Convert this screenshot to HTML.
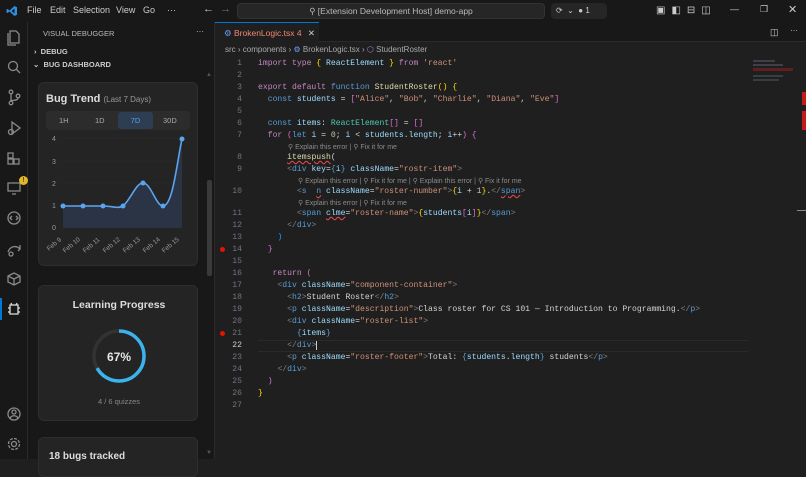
<!DOCTYPE html>
<html><head><meta charset="utf-8"><style>
*{box-sizing:border-box;margin:0;padding:0}
body{width:806px;height:459px;overflow:hidden;background:#1f1f1f;font-family:"Liberation Sans",sans-serif;color:#ccc;position:relative}
.abs{position:absolute}
#title{left:0;top:0;width:806px;height:22px;background:#181818;}
.menu{top:5px;font-size:9px;color:#ccc}
#act{left:0;top:22px;width:28px;height:437px;background:#181818;border-right:1px solid #2b2b2b}
#side{left:28px;top:22px;width:187px;height:437px;background:#181818;border-right:1px solid #2b2b2b}
.card{background:#242424;border:1px solid #2e2e2e;border-radius:6px}
#editor{left:215px;top:22px;width:591px;height:437px;background:#1f1f1f}
.code{font-family:"Liberation Mono",monospace;font-size:8.1px;white-space:pre;line-height:12px;height:12px}
.ln{position:absolute;left:0;width:27px;text-align:right;color:#6e7681;font-family:"Liberation Mono",monospace;font-size:8.1px}
.row{position:absolute;left:0;width:560px;height:12px}
.row .c{position:absolute;left:43px}
.inl{position:absolute;font-size:7px;color:#8b8b8b;white-space:pre}
.k{color:#c586c0}.b{color:#569cd6}.t{color:#4ec9b0}.v{color:#9cdcfe}.s{color:#ce9178}.f{color:#dcdcaa}.y{color:#ffd700}.p{color:#da70d6}.g{color:#808080}.w{color:#d4d4d4}.bl{color:#179fff}
.sq{text-decoration:underline wavy #f14c4c;text-decoration-thickness:1px}
</style></head><body>
<div id="title" class="abs">
 <svg class="abs" style="left:6px;top:5px" width="12" height="12" viewBox="0 0 24 24"><path d="M17 2l5 2.5v15L17 22 7 13l-4 3-2-1V9l2-1 4 3 10-9zm0 5l-6 5 6 5z" fill="#2f8fe0"/></svg>
 <span class="abs menu" style="left:27px">File</span>
 <span class="abs menu" style="left:50px">Edit</span>
 <span class="abs menu" style="left:73px">Selection</span>
 <span class="abs menu" style="left:116px">View</span>
 <span class="abs menu" style="left:143px">Go</span>
 <span class="abs menu" style="left:167px">···</span>
 <span class="abs menu" style="left:203px;font-size:11px;top:3px">←</span>
 <span class="abs menu" style="left:220px;font-size:11px;top:3px;color:#777">→</span>
 <div class="abs" style="left:237px;top:3px;width:308px;height:16px;background:#262626;border:1px solid #333;border-radius:4px;font-size:8.5px;color:#bbb;text-align:center;line-height:14px">⚲ [Extension Development Host] demo-app</div>
 <div class="abs" style="left:551px;top:3px;width:56px;height:16px;background:#262626;border-radius:4px;font-size:8px;color:#ccc;line-height:16px;padding-left:5px">⟳ &nbsp;⌄ &nbsp;● 1</div>
 <div class="abs" style="left:656px;top:5px;font-size:10px;color:#ccc;letter-spacing:6px">▣◧⊟◫</div>
 <span class="abs menu" style="left:730px;top:4px">—</span>
 <span class="abs menu" style="left:760px;top:4px">❐</span>
 <span class="abs menu" style="left:788px;top:3px;font-size:11px">✕</span>
</div>
<div id="act" class="abs">
 <svg width="28" height="437" viewBox="0 22 28 437" fill="none" stroke="#8a8a8a" stroke-width="1.3">
  <path d="M10 31h6l3 3v9h-9z M8 33v12h8"/>
  <circle cx="13" cy="66" r="4.5"/><path d="M16 69l4 4"/>
  <circle cx="11" cy="92" r="1.8"/><circle cx="11" cy="103" r="1.8"/><circle cx="18" cy="96" r="1.8"/><path d="M11 94v7M18 98c0 3-7 2-7 3"/>
  <path d="M12 122l8 6-8 6z"/><circle cx="11" cy="132" r="2.5"/>
  <path d="M8 153h5v5H8zM8 159h5v5H8zM14 159h5v5h-5z"/>
  <path d="M8 183h12v8H8z M12 194h4"/>
  <circle cx="14" cy="218" r="6"/><path d="M12 216l-2 2 2 2M16 216l2 2-2 2"/>
  <path d="M8 252c2-6 8-7 12-3l-2 2M20 249v-4"/><circle cx="11" cy="254" r="2"/>
  <path d="M8 276l6-3 6 3v6l-6 3-6-3z M8 276l6 3 6-3 M14 279v6"/>
  <path d="M10 305h8v9h-8z M11 303l1 2M17 303l-1 2M8 308h2M18 308h2M8 312h2M18 312h2" stroke="#ddd"/>
  <circle cx="14" cy="414" r="6"/><circle cx="14" cy="412" r="2"/><path d="M10 418c2-3 6-3 8 0"/>
  <circle cx="14" cy="444" r="2.5"/><circle cx="14" cy="444" r="5.5" stroke-dasharray="3 1.3"/>
 </svg>
 <div class="abs" style="left:19px;top:154px;width:9px;height:9px;border-radius:50%;background:#e5b52a;font-size:7px;color:#000;text-align:center;line-height:9px">!</div>
 <div class="abs" style="left:0;top:276px;width:2px;height:22px;background:#0078d4"></div>
</div>
<div id="side" class="abs">
 <span class="abs" style="left:15px;top:7px;font-size:7.5px;color:#bbb">VISUAL DEBUGGER</span>
 <span class="abs" style="left:168px;top:5px;font-size:8px">···</span>
 <span class="abs" style="left:6px;top:25px;font-size:7.5px;font-weight:bold;color:#ccc">›&nbsp; DEBUG</span>
 <span class="abs" style="left:5px;top:38px;font-size:7.5px;font-weight:bold;color:#ccc">⌄&nbsp; BUG DASHBOARD</span>
 <div class="abs" style="left:179px;top:158px;width:5px;height:96px;background:#3a3a3a;border-radius:2px"></div>
 <div class="abs card" style="left:10px;top:60px;width:160px;height:184px">
  <div class="abs" style="left:7px;top:10px;font-size:11px;font-weight:bold;color:#ddd">Bug Trend <span style="font-size:8px;font-weight:normal;color:#999">(Last 7 Days)</span></div>
  <div class="abs" style="left:7px;top:28px;width:144px;height:19px;background:#2c2c2c;border-radius:4px;font-size:7.5px;color:#aaa">
   <span class="abs" style="left:13px;top:5px">1H</span><span class="abs" style="left:49px;top:5px">1D</span>
   <div class="abs" style="left:72px;top:1px;width:35px;height:17px;background:#2d3e52;border-radius:3px;color:#5aa0e8;text-align:center;line-height:17px">7D</div>
   <span class="abs" style="left:117px;top:5px">30D</span>
  </div>
  <svg class="abs" style="left:0;top:0" width="160" height="184" viewBox="38 82 160 184">
   <g font-size="7" fill="#999" font-family="Liberation Sans"><text x="51" y="140">4</text><text x="51" y="163">3</text><text x="51" y="185">2</text><text x="51" y="207">1</text><text x="51" y="229">0</text></g>
   <g stroke="#2e2e2e" stroke-width="0.6"><path d="M60 137H183M60 160H183M60 182H183M60 204H183"/></g>
   <path d="M62 205L82 205L102 205C112 205 116 208 122 205C130 198 135 182 142 182C150 182 155 205 162 205C172 205 176 160 181 138L181 227L62 227Z" fill="#2a3445"/>
   <path d="M62 205L82 205L102 205C112 205 116 208 122 205C130 198 135 182 142 182C150 182 155 205 162 205C172 205 176 160 181 138" fill="none" stroke="#5ba4f0" stroke-width="1.6"/>
   <g fill="#5ba4f0"><circle cx="62" cy="205" r="2.5"/><circle cx="82" cy="205" r="2.5"/><circle cx="102" cy="205" r="2.5"/><circle cx="122" cy="205" r="2.5"/><circle cx="142" cy="182" r="2.5"/><circle cx="162" cy="205" r="2.5"/><circle cx="181" cy="138" r="2.5"/></g>
   <g font-size="6.5" fill="#999" font-family="Liberation Sans">
    <text transform="translate(48 250) rotate(-40)">Feb 9</text><text transform="translate(64 252) rotate(-40)">Feb 10</text><text transform="translate(84 252) rotate(-40)">Feb 11</text><text transform="translate(104 252) rotate(-40)">Feb 12</text><text transform="translate(124 252) rotate(-40)">Feb 13</text><text transform="translate(144 252) rotate(-40)">Feb 14</text><text transform="translate(163 252) rotate(-40)">Feb 15</text>
   </g>
  </svg>
 </div>
 <div class="abs card" style="left:10px;top:263px;width:160px;height:136px">
  <div class="abs" style="left:0;top:13px;width:160px;text-align:center;font-size:10.5px;font-weight:bold;color:#ddd">Learning Progress</div>
  <svg class="abs" style="left:52px;top:42px" width="56" height="56"><circle cx="28" cy="28" r="25" fill="none" stroke="#333" stroke-width="3.5"/><circle cx="28" cy="28" r="25" fill="none" stroke="#3bb4ee" stroke-width="3.5" stroke-dasharray="105 200" transform="rotate(-90 28 28)"/></svg>
  <div class="abs" style="left:0;top:64px;width:160px;text-align:center;font-size:12px;font-weight:bold;color:#e6e6e6">67%</div>
  <div class="abs" style="left:0;top:111px;width:160px;text-align:center;font-size:7.5px;color:#888">4 / 6 quizzes</div>
 </div>
 <div class="abs card" style="left:10px;top:415px;width:160px;height:40px">
  <div class="abs" style="left:10px;top:13px;font-size:10px;font-weight:bold;color:#ddd">18 bugs tracked</div>
 </div>
 <span class="abs" style="left:178px;top:50px;font-size:6px;color:#555">▲</span>
 <span class="abs" style="left:178px;top:428px;font-size:6px;color:#555">▼</span>
</div>
<div id="editor" class="abs">
 <div class="abs" style="left:0;top:0;width:591px;height:20px;background:#181818;border-bottom:1px solid #2b2b2b"></div>
 <div class="abs" style="left:0;top:0;width:104px;height:21px;background:#1f1f1f;border-top:1px solid #0078d4;font-size:8.5px;color:#f48771;line-height:20px;padding-left:9px"><span style="color:#6c9ef8">⚙</span> BrokenLogic.tsx 4 <span style="color:#ccc;margin-left:4px">✕</span></div>
 <span class="abs" style="left:555px;top:5px;font-size:9px">◫</span><span class="abs" style="left:575px;top:4px;font-size:8px">···</span>
 <div class="abs" style="left:10px;top:23px;font-size:8px;color:#aaa">src › components › <span style="color:#6c9ef8">⚙</span> BrokenLogic.tsx › <span style="color:#b180d7">⬡</span> StudentRoster</div>
 <div class="abs" style="left:0;top:36px">
  <div class="row code" style="top:0"><span class="ln">1</span><span class="c"><span class="k">import type</span> <span class="y">{</span> <span class="v">ReactElement</span> <span class="y">}</span> <span class="k">from</span> <span class="s">'react'</span></span></div>
  <div class="row code" style="top:12px"><span class="ln">2</span></div>
  <div class="row code" style="top:24px"><span class="ln">3</span><span class="c"><span class="k">export default</span> <span class="b">function</span> <span class="f">StudentRoster</span><span class="y">()</span> <span class="y">{</span></span></div>
  <div class="row code" style="top:36px"><span class="ln">4</span><span class="c">  <span class="b">const</span> <span class="v">students</span> <span class="w">=</span> <span class="p">[</span><span class="s">"Alice"</span><span class="w">,</span> <span class="s">"Bob"</span><span class="w">,</span> <span class="s">"Charlie"</span><span class="w">,</span> <span class="s">"Diana"</span><span class="w">,</span> <span class="s">"Eve"</span><span class="p">]</span></span></div>
  <div class="row code" style="top:48px"><span class="ln">5</span></div>
  <div class="row code" style="top:60px"><span class="ln">6</span><span class="c">  <span class="b">const</span> <span class="v">items</span><span class="w">:</span> <span class="t">ReactElement</span><span class="p">[]</span> <span class="w">=</span> <span class="p">[]</span></span></div>
  <div class="row code" style="top:72px"><span class="ln">7</span><span class="c">  <span class="k">for</span> <span class="p">(</span><span class="b">let</span> <span class="v">i</span> <span class="w">=</span> <span class="s" style="color:#b5cea8">0</span><span class="w">;</span> <span class="v">i</span> <span class="w">&lt;</span> <span class="v">students</span><span class="w">.</span><span class="v">length</span><span class="w">;</span> <span class="v">i</span><span class="w">++</span><span class="p">)</span> <span class="p">{</span></span></div>
  <div class="inl" style="left:73px;top:85px">⚲ Explain this error | ⚲ Fix it for me</div>
  <div class="row code" style="top:94px"><span class="ln">8</span><span class="c">      <span class="f sq">itemspush</span><span class="w">(</span></span></div>
  <div class="row code" style="top:106px"><span class="ln">9</span><span class="c">      <span class="g">&lt;</span><span class="b">div</span> <span class="v">key</span><span class="w">=</span><span class="b">{</span><span class="v">i</span><span class="b">}</span> <span class="v">className</span><span class="w">=</span><span class="s">"rostr-item"</span><span class="g">&gt;</span></span></div>
  <div class="inl" style="left:83px;top:119px">⚲ Explain this error | ⚲ Fix it for me | ⚲ Explain this error | ⚲ Fix it for me</div>
  <div class="row code" style="top:128px"><span class="ln">10</span><span class="c">        <span class="g">&lt;</span><span class="b">s</span>  <span class="b sq">n</span> <span class="v">className</span><span class="w">=</span><span class="s">"roster-number"</span><span class="g">&gt;</span><span class="y">{</span><span class="v">i</span> <span class="w">+</span> <span style="color:#b5cea8">1</span><span class="y">}</span><span class="w">.</span><span class="g">&lt;/</span><span class="b sq">span</span><span class="g">&gt;</span></span></div>
  <div class="inl" style="left:83px;top:141px">⚲ Explain this error | ⚲ Fix it for me</div>
  <div class="row code" style="top:150px"><span class="ln">11</span><span class="c">        <span class="g">&lt;</span><span class="b">span</span> <span class="v sq">clme</span><span class="w">=</span><span class="s">"roster-name"</span><span class="g">&gt;</span><span class="y">{</span><span class="v">students</span><span class="p">[</span><span class="v">i</span><span class="p">]</span><span class="y">}</span><span class="g">&lt;/</span><span class="b">span</span><span class="g">&gt;</span></span></div>
  <div class="row code" style="top:162px"><span class="ln">12</span><span class="c">      <span class="g">&lt;/</span><span class="b">div</span><span class="g">&gt;</span></span></div>
  <div class="row code" style="top:174px"><span class="ln">13</span><span class="c">    <span class="bl">)</span></span></div>
  <div class="row code" style="top:186px"><span class="ln">14</span><span class="c">  <span class="p">}</span></span></div>
  <div class="row code" style="top:198px"><span class="ln">15</span></div>
  <div class="row code" style="top:210px"><span class="ln">16</span><span class="c">   <span class="k">return</span> <span class="p">(</span></span></div>
  <div class="row code" style="top:222px"><span class="ln">17</span><span class="c">    <span class="g">&lt;</span><span class="b">div</span> <span class="v">className</span><span class="w">=</span><span class="s">"component-container"</span><span class="g">&gt;</span></span></div>
  <div class="row code" style="top:234px"><span class="ln">18</span><span class="c">      <span class="g">&lt;</span><span class="b">h2</span><span class="g">&gt;</span><span class="w">Student Roster</span><span class="g">&lt;/</span><span class="b">h2</span><span class="g">&gt;</span></span></div>
  <div class="row code" style="top:246px"><span class="ln">19</span><span class="c">      <span class="g">&lt;</span><span class="b">p</span> <span class="v">className</span><span class="w">=</span><span class="s">"description"</span><span class="g">&gt;</span><span class="w">Class roster for CS 101 — Introduction to Programming.</span><span class="g">&lt;/</span><span class="b">p</span><span class="g">&gt;</span></span></div>
  <div class="row code" style="top:258px"><span class="ln">20</span><span class="c">      <span class="g">&lt;</span><span class="b">div</span> <span class="v">className</span><span class="w">=</span><span class="s">"roster-list"</span><span class="g">&gt;</span></span></div>
  <div class="row code" style="top:270px"><span class="ln">21</span><span class="c">        <span class="b">{</span><span class="v">items</span><span class="b">}</span></span></div>
  <div class="row code" style="top:282px;border-top:1px solid #2a2a2a;border-bottom:1px solid #2a2a2a;left:43px;width:490px"></div>
  <div class="row code" style="top:282px"><span class="ln" style="color:#ccc">22</span><span class="c">      <span class="g">&lt;/</span><span class="b">div</span><span class="g">&gt;</span><span style="border-left:1px solid #ccc"></span></span></div>
  <div class="row code" style="top:294px"><span class="ln">23</span><span class="c">      <span class="g">&lt;</span><span class="b">p</span> <span class="v">className</span><span class="w">=</span><span class="s">"roster-footer"</span><span class="g">&gt;</span><span class="w">Total: </span><span class="b">{</span><span class="v">students</span><span class="w">.</span><span class="v">length</span><span class="b">}</span><span class="w"> students</span><span class="g">&lt;/</span><span class="b">p</span><span class="g">&gt;</span></span></div>
  <div class="row code" style="top:306px"><span class="ln">24</span><span class="c">    <span class="g">&lt;/</span><span class="b">div</span><span class="g">&gt;</span></span></div>
  <div class="row code" style="top:318px"><span class="ln">25</span><span class="c">  <span class="p">)</span></span></div>
  <div class="row code" style="top:330px"><span class="ln">26</span><span class="c"><span class="y">}</span></span></div>
  <div class="row code" style="top:342px"><span class="ln">27</span></div>
 </div>
 <div class="abs" style="left:5px;top:225px;width:5px;height:5px;border-radius:50%;background:#e51400"></div>
 <div class="abs" style="left:5px;top:309px;width:5px;height:5px;border-radius:50%;background:#e51400"></div>
 <div class="abs" style="left:538px;top:36px;width:40px;height:30px;opacity:.6">
  <div style="height:2px;width:22px;background:#556;margin:2px 0"></div>
  <div style="height:2px;width:30px;background:#556;margin:2px 0"></div>
  <div style="height:3px;width:40px;background:#8a2020;margin:2px 0"></div>
  <div style="height:2px;width:30px;background:#455;margin:4px 0 2px"></div>
  <div style="height:2px;width:26px;background:#455;margin:2px 0"></div>
 </div>
 <div class="abs" style="left:587px;top:70px;width:4px;height:13px;background:#c41a1a"></div>
 <div class="abs" style="left:587px;top:89px;width:4px;height:19px;background:#c41a1a"></div>
 <div class="abs" style="left:582px;top:188px;width:9px;height:1px;background:#888"></div>
</div>
</body></html>
